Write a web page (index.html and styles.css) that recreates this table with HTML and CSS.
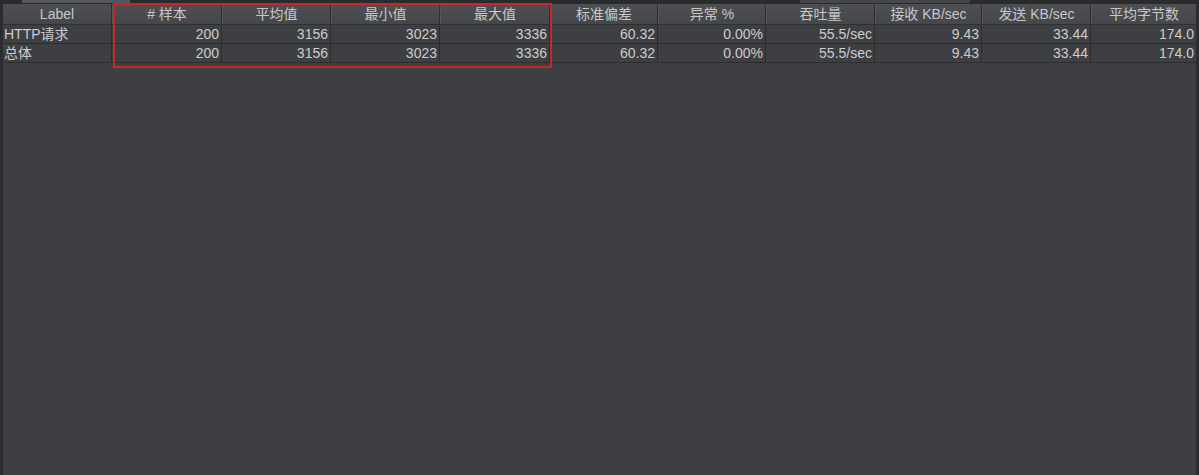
FILE: index.html
```html
<!DOCTYPE html>
<html lang="zh">
<head>
<meta charset="utf-8">
<link rel="stylesheet" href="styles.css">
</head>
<body>
<div class="frame">
  <div class="topstrip">
    <span class="tab tab-a"></span>
    <span class="tab tab-b"></span>
  </div>
  <div class="panel">
    <div class="table">
      <div class="row head">
        <div class="c">Label</div>
        <div class="c"># 样本</div>
        <div class="c">平均值</div>
        <div class="c">最小值</div>
        <div class="c">最大值</div>
        <div class="c">标准偏差</div>
        <div class="c">异常 %</div>
        <div class="c">吞吐量</div>
        <div class="c">接收 KB/sec</div>
        <div class="c">发送 KB/sec</div>
        <div class="c">平均字节数</div>
      </div>
      <div class="row body">
        <div class="c l">HTTP请求</div>
        <div class="c">200</div>
        <div class="c">3156</div>
        <div class="c">3023</div>
        <div class="c">3336</div>
        <div class="c">60.32</div>
        <div class="c">0.00%</div>
        <div class="c">55.5/sec</div>
        <div class="c">9.43</div>
        <div class="c">33.44</div>
        <div class="c">174.0</div>
      </div>
      <div class="row body">
        <div class="c l">总体</div>
        <div class="c">200</div>
        <div class="c">3156</div>
        <div class="c">3023</div>
        <div class="c">3336</div>
        <div class="c">60.32</div>
        <div class="c">0.00%</div>
        <div class="c">55.5/sec</div>
        <div class="c">9.43</div>
        <div class="c">33.44</div>
        <div class="c">174.0</div>
      </div>
    </div>
    <div class="highlight"></div>
  </div>
</div>
</body>
</html>
```

FILE: styles.css
```css
* { box-sizing: border-box; }
html, body {
  margin: 0;
  padding: 0;
  background: #3e3f42;
}
body {
  width: 1199px;
  height: 475px;
  overflow: hidden;
  font-family: "Liberation Sans", Arial, "Noto Sans CJK SC", sans-serif;
  font-size: 14px;
  color: #cbcccd;
}
.frame {
  display: flex;
  flex-direction: column;
  height: 475px;
}
.topstrip {
  height: 4px;
  background: #2a2b2d;
  position: relative;
  flex: none;
}
.tab {
  position: absolute;
  top: 0;
  height: 3px;
  background: #55575b;
}
.tab-a { left: 22px; width: 108px; }
.tab-b { left: 800px; width: 170px; background: #46474a; }
.panel {
  position: relative;
  flex: 1;
  background: #3e3f42;
  border-left: 3px solid #2b2c2e;
  border-right: 3px solid #2b2c2e;
}
.row {
  display: grid;
  grid-template-columns: 109px 110px 109px 109px 110px 108px 108px 109px 107px 109px 1fr;
}
.head {
  height: 21px;
  background: linear-gradient(#4d4f53, #45474a);
  border-bottom: 1px solid #2f3033;
}
.head .c {
  text-align: center;
  line-height: 20px;
  border-right: 1px solid #2e2f31;
  border-left: 1px solid #55575b;
  color: #c6c7c9;
  white-space: nowrap;
}
.head .c:first-child { border-left: none; }
.head .c:last-child { border-right: none; }
.body {
  height: 19px;
  border-bottom: 1px solid #2c2d2f;
}
.body .c {
  text-align: right;
  padding-right: 2px;
  line-height: 18px;
  border-right: 1px solid #2c2d2f;
  white-space: nowrap;
}
.body .c:last-child { border-right: none; }
.body .c.l {
  text-align: left;
  padding-left: 1px;
}
.highlight {
  position: absolute;
  left: 110px;
  top: -1px;
  width: 439px;
  height: 65px;
  border: 2px solid #c8262c;
  pointer-events: none;
}
```
